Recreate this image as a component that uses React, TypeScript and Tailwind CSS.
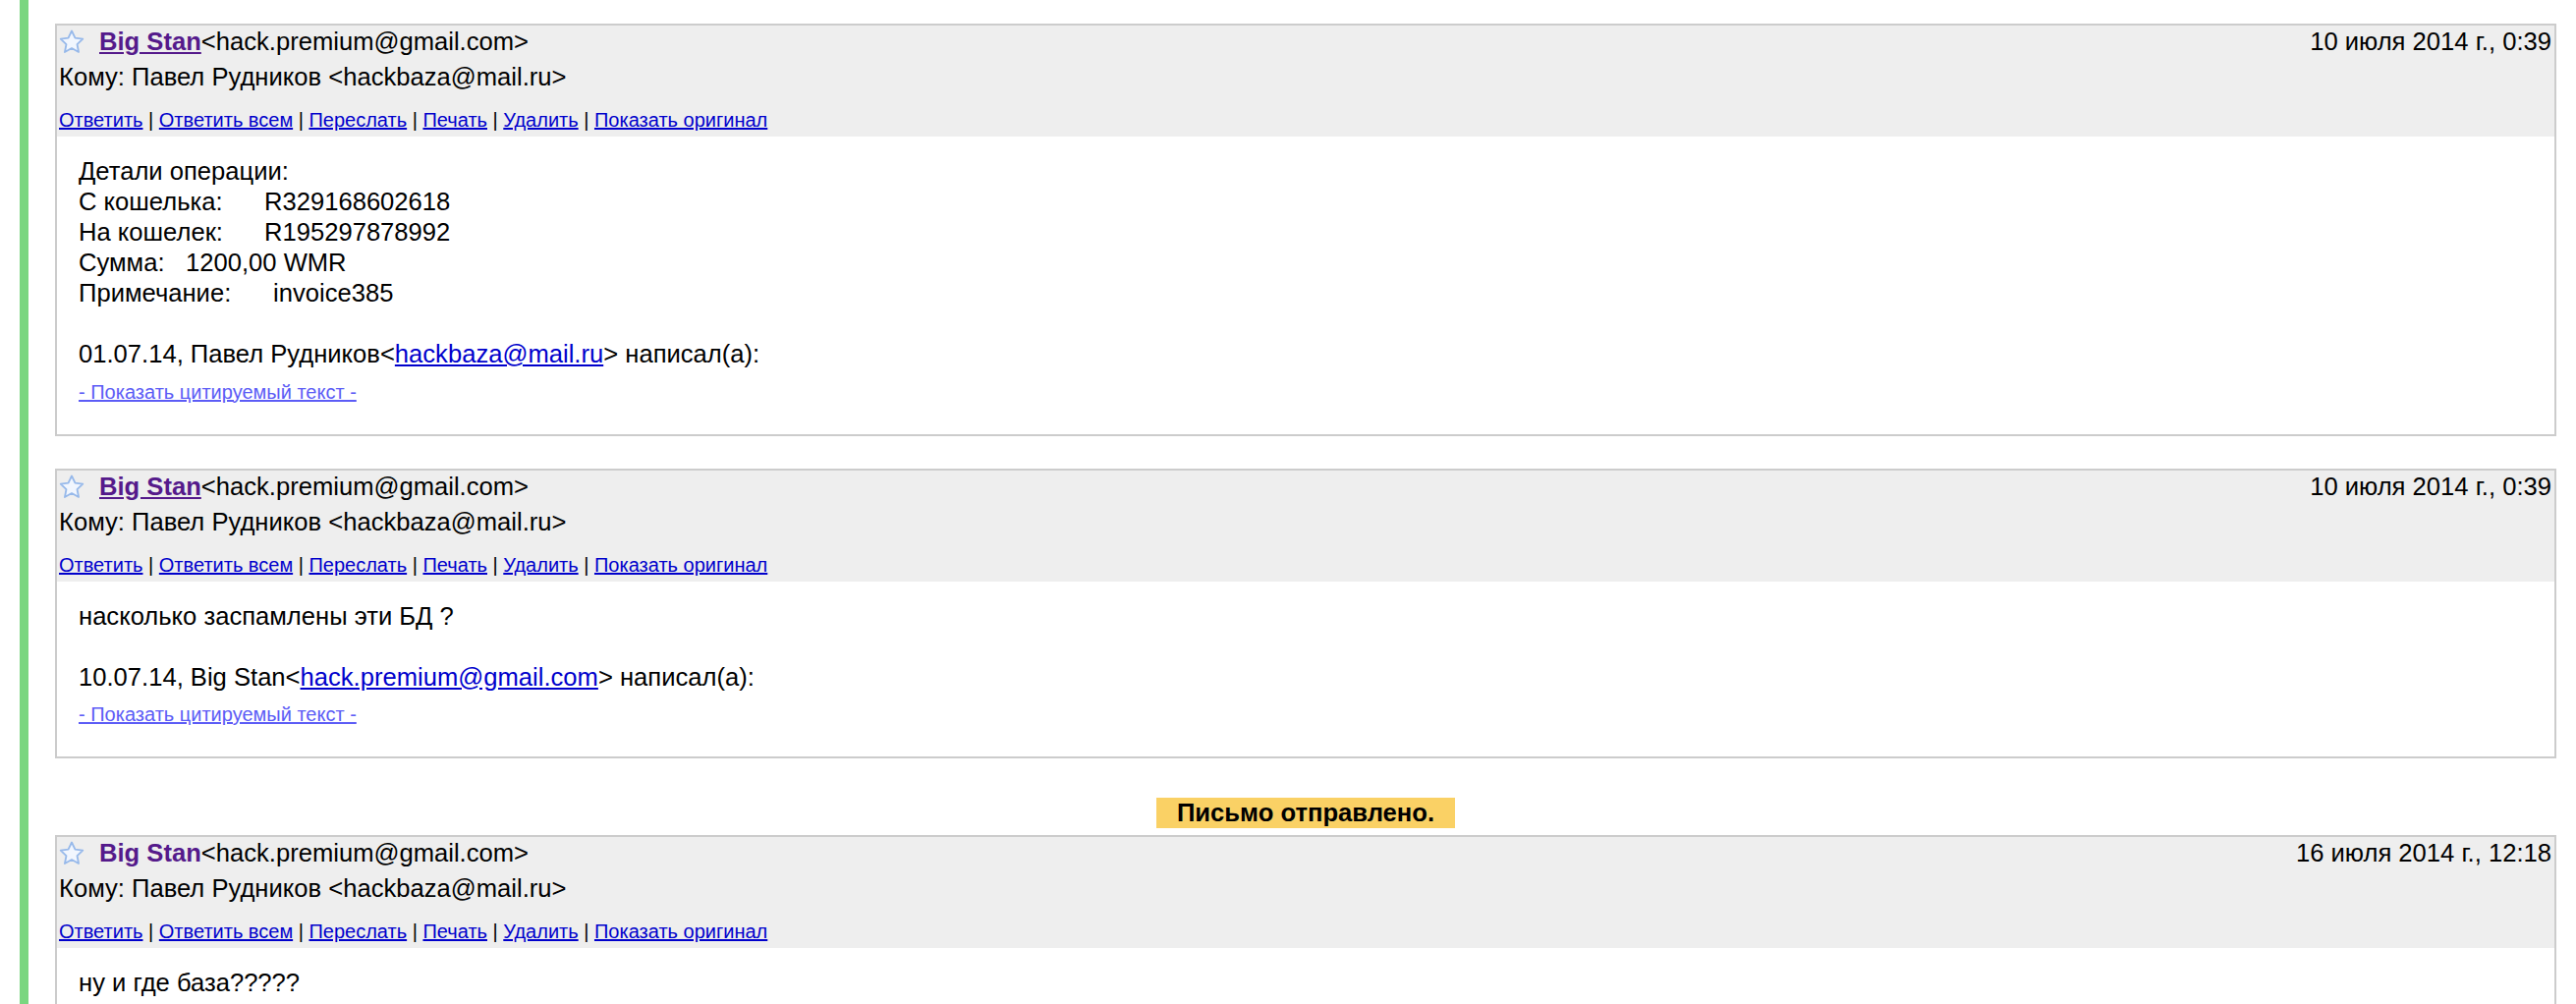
import React from 'react';

const Star = () => (
    <svg width="26" height="26" viewBox="0 0 24 24" className="shrink-0">
        <path
            d="M12 1.4l3.2 6.6 7.2.95-5.3 5.05 1.4 7.2L12 17.6l-6.5 3.6 1.4-7.2L1.6 8.95l7.2-.95z"
            fill="#f1f6fe"
            stroke="#97b9ea"
            strokeWidth="1.7"
            strokeLinejoin="round"
        />
    </svg>
);

const actions = ['Ответить', 'Ответить всем', 'Переслать', 'Печать', 'Удалить', 'Показать оригинал'];

type MessageProps = {
    date: string;
    underlineName?: boolean;
    children: React.ReactNode;
    quote?: React.ReactNode;
    className?: string;
};

const Message = ({ date, underlineName = true, children, quote, className = '' }: MessageProps) => {
    return (
        <div className={`border-2 border-[#cccccc] bg-white ${className}`}>
            <div className="bg-[#eeeeee]">
                <div className="flex justify-between items-center h-[34px]">
                    <div className="flex items-center pl-[2px] gap-[15px]">
                        <Star />
                        <div className="whitespace-nowrap">
                            <a className={`font-bold text-[#551a8b] ${underlineName ? 'underline' : ''}`}>Big Stan</a>
                            <span>&lt;hack.premium@gmail.com&gt;</span>
                        </div>
                    </div>
                    <div className="pr-[3px] whitespace-nowrap">{date}</div>
                </div>
                <div className="flex items-center h-[38px] pl-[2px] whitespace-nowrap">
                    Кому: Павел Рудников &lt;hackbaza@mail.ru&gt;
                </div>
                <div className="mt-[12px] pb-[5px] pl-[2px] text-[20px] leading-[24px] whitespace-nowrap">
                    {actions.map((action, i) => (
                        <React.Fragment key={action}>
                            {i > 0 && <span> | </span>}
                            <a className="text-[#0000cc] underline">{action}</a>
                        </React.Fragment>
                    ))}
                </div>
            </div>
            <div className="px-[22px] pt-[20px] pb-[31px] leading-[31px]">
                {children}
                {quote && (
                    <>
                        <div className="h-[31px]"></div>
                        <div>{quote}</div>
                        <div className="mt-[10.5px] text-[20px] leading-[24px]">
                            <a className="text-[#5c5cf6] underline">- Показать цитируемый текст -</a>
                        </div>
                    </>
                )}
            </div>
        </div>
    );
};

const App = () => {
    return (
        <div className="flex min-h-screen bg-white text-black text-[25.6px] leading-[29.4px] font-['Liberation_Sans',Arial,sans-serif]">
            <div className="ml-[20px] w-[9px] bg-[#7ad680] shrink-0"></div>
            <div className="flex flex-col flex-1 ml-[27px] mr-[20px] pt-[24px]">
                <Message
                    date="10 июля 2014 г., 0:39"
                    quote={
                        <>
                            01.07.14, Павел Рудников&lt;<a className="text-[#0000cc] underline">hackbaza@mail.ru</a>&gt; написал(а):
                        </>
                    }
                >
                    <div>Детали операции:</div>
                    <div><span className="inline-block w-[189px]">С кошелька:</span>R329168602618</div>
                    <div><span className="inline-block w-[189px]">На кошелек:</span>R195297878992</div>
                    <div><span className="inline-block w-[109px]">Сумма:</span>1200,00 WMR</div>
                    <div><span className="inline-block w-[198px]">Примечание:</span>invoice385</div>
                </Message>

                <Message
                    className="mt-[33px]"
                    date="10 июля 2014 г., 0:39"
                    quote={
                        <>
                            10.07.14, Big Stan&lt;<a className="text-[#0000cc] underline">hack.premium@gmail.com</a>&gt; написал(а):
                        </>
                    }
                >
                    <div>насколько заспамлены эти БД ?</div>
                </Message>

                <div className="self-center mt-[40px] mb-[7px] h-[31px] px-[21px] bg-[#fad165] font-bold leading-[31px]">
                    Письмо отправлено.
                </div>

                <Message date="16 июля 2014 г., 12:18" underlineName={false}>
                    <div>ну и где база?????</div>
                    <div className="h-[93px]"></div>
                </Message>
            </div>
        </div>
    );
};

export default App;
